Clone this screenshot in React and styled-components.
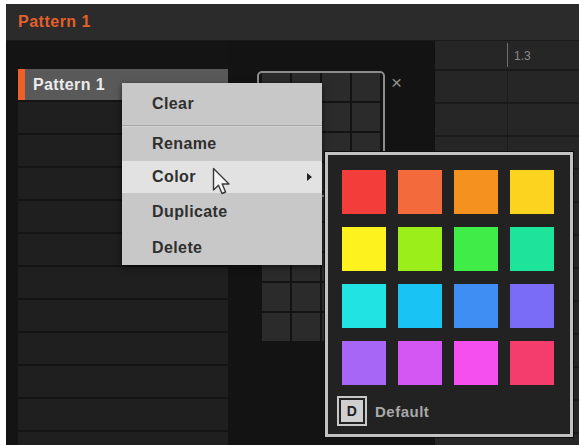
import React from 'react';
import styled, { createGlobalStyle } from 'styled-components';

const Global = createGlobalStyle`
  html, body {
    margin: 0;
    padding: 0;
    background: #ffffff;
  }
  body {
    font-family: 'Liberation Sans', Arial, sans-serif;
  }
`

const Frame = styled.div`
  position: relative;
  margin: 4px 0 0 6px;
  width: 573px;
  height: 441px;
  background: #141414;
  overflow: hidden;
  display: flex;
  flex-direction: column;
`

const Header = styled.div`
  height: 36px;
  flex: none;
  background: #2b2b2b;
  border-bottom: 1px solid #1a1a1a;
  display: flex;
  align-items: center;
  padding-left: 12px;
  color: #e3602c;
  font-weight: bold;
  font-size: 16px;
  letter-spacing: 0.5px;
`

const Body = styled.div`
  flex: 1;
  display: flex;
  min-height: 0;
`

const List = styled.div`
  width: 210px;
  padding: 28px 0 0 12px;
  display: flex;
  flex-direction: column;
  gap: 2px;
`

const Row = styled.div`
  height: 31px;
  flex: none;
  background: ${p => p.selected ? '#595959' : '#1f1f1f'};
  border-left: ${p => p.selected ? '7px solid #ee5f2a' : '0'};
  display: flex;
  align-items: center;
  padding-left: 8px;
  color: #ececec;
  font-weight: bold;
  font-size: 16px;
  letter-spacing: 0.4px;
`

const Middle = styled.div`
  width: 207px;
  background: #131313;
  padding: 32px 0 0 34px;
  box-sizing: border-box;
  display: flex;
  align-items: flex-start;
`

const PadArea = styled.div`
  position: relative;
`

const Pads = styled.div`
  display: grid;
  grid-template-columns: repeat(4, 28px);
  grid-auto-rows: 28px;
  gap: 2px;
`

const Pad = styled.div`
  background: #2b2b2b;
`

const SlotOutline = styled.div`
  position: absolute;
  left: -5px;
  top: -2px;
  width: 124px;
  height: 122px;
  border: 2px solid #8c8c8c;
  border-radius: 5px;
`

const CloseX = styled.div`
  margin: 0 0 0 11px;
  color: #8e8e8e;
  font-size: 19px;
  line-height: 1;
`

const Timeline = styled.div`
  flex: 1;
  background: #262626;
  display: flex;
  flex-direction: column;
`

const TimeRow = styled.div`
  height: ${p => p.head ? 28 : 31}px;
  flex: none;
  display: grid;
  grid-template-columns: 73px 1fr;
  border-bottom: 2px solid #1a1a1a;
`

const TimeCell = styled.div`
  border-right: ${p => p.first ? `1px solid ${p.head ? '#6e6e6e' : '#1c1c1c'}` : '0'};
  margin: ${p => p.head && p.first ? '2px 0' : '0'};
  color: #8a8a8a;
  font-size: 12px;
  padding: 8px 0 0 6px;
`

const Menu = styled.div`
  position: absolute;
  left: 116px;
  top: 79px;
  width: 200px;
  background: #c8c8c8;
  box-shadow: 0 2px 6px rgba(0, 0, 0, 0.6);
  display: flex;
  flex-direction: column;
`

const MenuItem = styled.div`
  height: ${p => p.h}px;
  display: flex;
  align-items: center;
  justify-content: space-between;
  padding: 0 10px 0 30px;
  background: ${p => p.active ? '#e2e2e2' : 'transparent'};
  color: #2f2f2f;
  font-weight: bold;
  font-size: 16px;
  letter-spacing: 0.4px;
`

const Separator = styled.div`
  height: 1px;
  background: #a4a4a4;
  border-bottom: 1px solid #d6d6d6;
`

const SubArrow = styled.span`
  width: 0;
  height: 0;
  border-top: 4px solid transparent;
  border-bottom: 4px solid transparent;
  border-left: 5px solid #222;
`

const Cursor = styled.svg`
  position: absolute;
  left: 206px;
  top: 163px;
`

const Palette = styled.div`
  position: absolute;
  left: 319px;
  top: 148px;
  width: 248px;
  height: 285px;
  box-sizing: border-box;
  border: 3px solid #c2c2c2;
  background: #222222;
  padding: 15px 0 0 14px;
  box-shadow: 0 0 0 1px #0d0d0d;
`

const Swatches = styled.div`
  display: grid;
  grid-template-columns: repeat(4, 44px);
  grid-auto-rows: 44px;
  column-gap: 12px;
  row-gap: 13px;
`

const Swatch = styled.div`
  background: ${p => p.color};
`

const DefaultRow = styled.div`
  margin-top: 11px;
  margin-left: -5px;
  display: flex;
  align-items: center;
  gap: 8px;
  color: #a9a9a9;
  font-weight: bold;
  font-size: 15px;
  letter-spacing: 0.5px;
`

const DBox = styled.div`
  width: 30px;
  height: 30px;
  box-sizing: border-box;
  border: 2px solid #c8c8c8;
  padding: 2px;
  display: flex;
`

const DInner = styled.div`
  flex: 1;
  background: #cfcfcf;
  color: #1e1e1e;
  font-size: 14px;
  font-weight: bold;
  display: flex;
  align-items: center;
  justify-content: center;
`

const colors = [
  '#f23d3b', '#f36a3d', '#f5921f', '#fcd41f',
  '#fdf21e', '#9bee19', '#40ec48', '#1ee39b',
  '#21e3e4', '#19c3f4', '#3e8ef4', '#7b6cf7',
  '#a766f5', '#d457f4', '#f54ff0', '#f43d6c',
]

const App = () => {
  return (
    <>
      <Global />
      <Frame>
        <Header>Pattern 1</Header>
        <Body>
          <List>
            <Row selected>Pattern 1</Row>
            {Array.from({ length: 11 }).map((_, i) => (
              <Row key={i} />
            ))}
          </List>
          <Middle>
            <PadArea>
              <Pads>
                {Array.from({ length: 36 }).map((_, i) => (
                  <Pad key={i} />
                ))}
              </Pads>
              <SlotOutline />
            </PadArea>
            <CloseX>×</CloseX>
          </Middle>
          <Timeline>
            <TimeRow head>
              <TimeCell first head />
              <TimeCell head>1.3</TimeCell>
            </TimeRow>
            {Array.from({ length: 11 }).map((_, i) => (
              <TimeRow key={i}>
                <TimeCell first />
                <TimeCell />
              </TimeRow>
            ))}
          </Timeline>
        </Body>

        <Menu>
          <MenuItem h={42}>Clear</MenuItem>
          <Separator />
          <MenuItem h={34}>Rename</MenuItem>
          <MenuItem h={32} active>Color <SubArrow /></MenuItem>
          <MenuItem h={38}>Duplicate</MenuItem>
          <MenuItem h={34}>Delete</MenuItem>
        </Menu>

        <Cursor width="20" height="30" viewBox="0 0 20 30">
          <path d="M1.5 1.5 L1.5 23 L6.5 18.2 L10 26.5 L13.6 25 L10.2 17 L17 17 Z" fill="#f4f4f4" stroke="#3a3a3a" strokeWidth="1.4" strokeLinejoin="round" />
        </Cursor>

        <Palette>
          <Swatches>
            {colors.map(c => (
              <Swatch key={c} color={c} />
            ))}
          </Swatches>
          <DefaultRow>
            <DBox><DInner>D</DInner></DBox>
            Default
          </DefaultRow>
        </Palette>
      </Frame>
    </>
  )
}

export default App;
